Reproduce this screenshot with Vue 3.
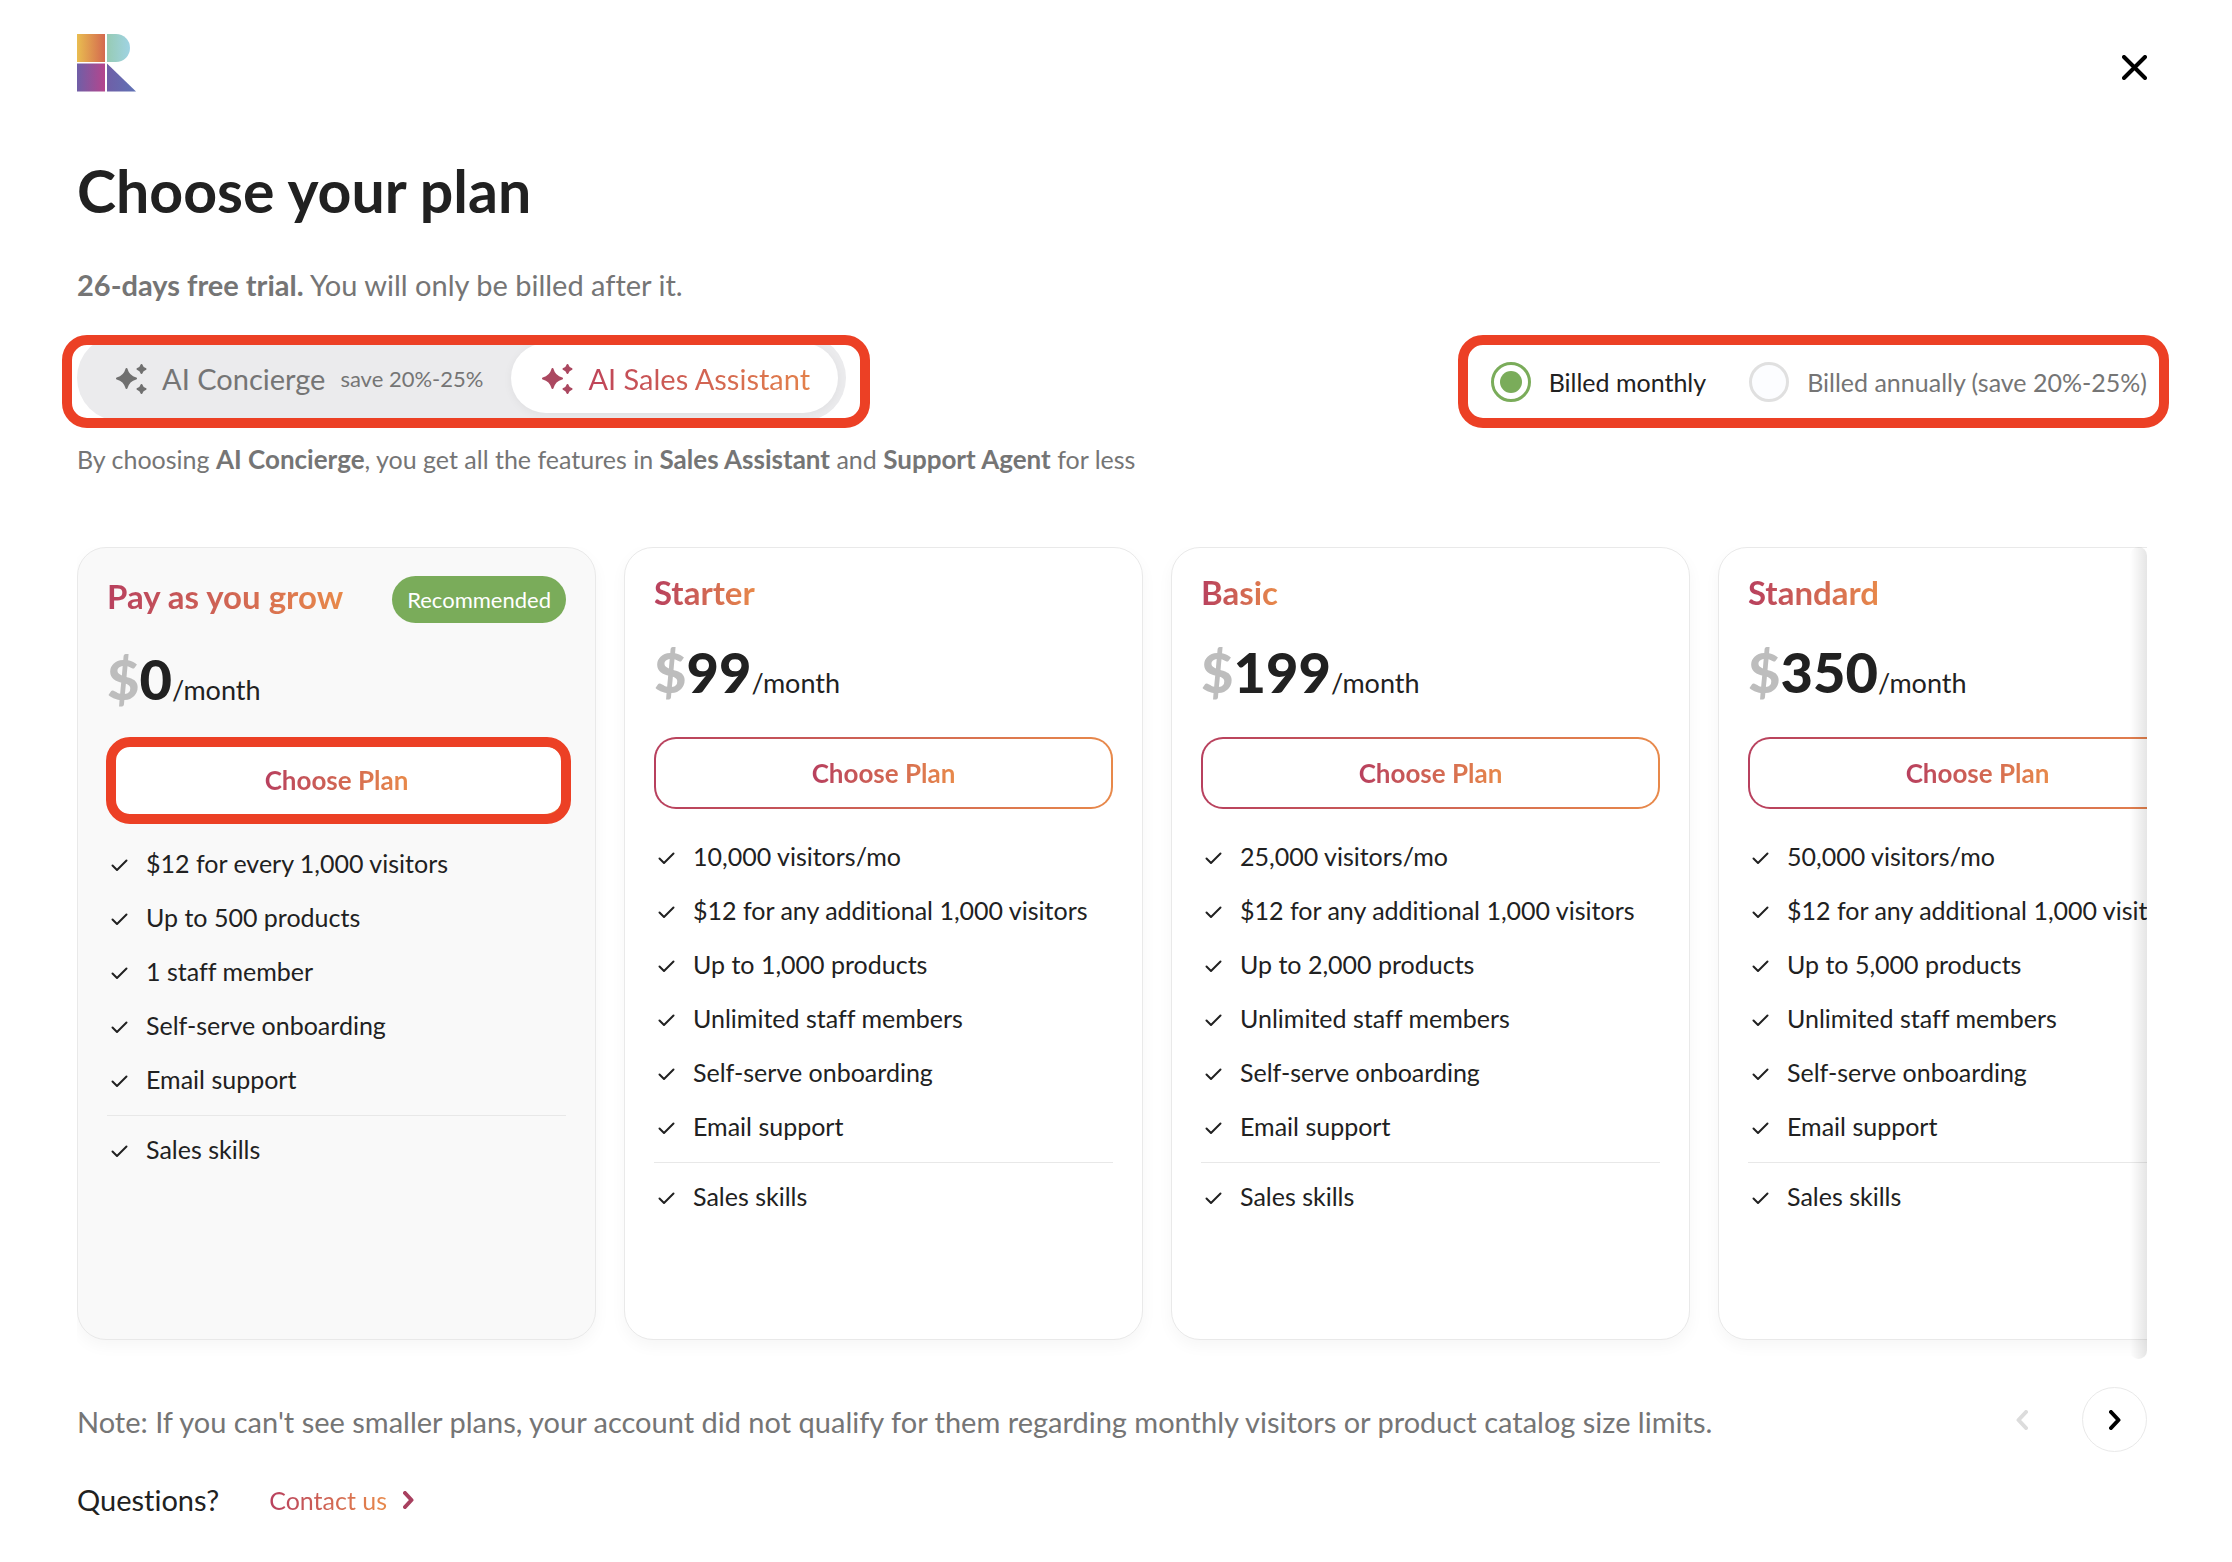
<script setup>
import { ref } from 'vue'

const product = ref('sales')
const billing = ref('monthly')

const tabs = [
  { id: 'concierge', label: 'AI Concierge', hint: 'save 20%-25%' },
  { id: 'sales', label: 'AI Sales Assistant' },
]

const periods = [
  { id: 'monthly', label: 'Billed monthly' },
  { id: 'annually', label: 'Billed annually (save 20%-25%)' },
]

const paidFeatures = (visitors, products) => [
  `${visitors} visitors/mo`,
  '$12 for any additional 1,000 visitors',
  `Up to ${products} products`,
  'Unlimited staff members',
  'Self-serve onboarding',
  'Email support',
]

const plans = [
  {
    name: 'Pay as you grow',
    price: '0',
    recommended: true,
    features: [
      '$12 for every 1,000 visitors',
      'Up to 500 products',
      '1 staff member',
      'Self-serve onboarding',
      'Email support',
    ],
  },
  { name: 'Starter', price: '99', features: paidFeatures('10,000', '1,000') },
  { name: 'Basic', price: '199', features: paidFeatures('25,000', '2,000') },
  { name: 'Standard', price: '350', features: paidFeatures('50,000', '5,000') },
]
const skills = ['Sales skills']
</script>

<template>
  <main class="page">
    <header class="top">
      <svg class="logo" viewBox="0 0 59 58" role="img" aria-label="Logo">
        <defs>
          <linearGradient id="lg-sun"><stop offset="0" stop-color="#e9bd50" /><stop offset="1" stop-color="#d4694f" /></linearGradient>
          <linearGradient id="lg-sky"><stop offset="0" stop-color="#97cbb4" /><stop offset="1" stop-color="#9fd3e3" /></linearGradient>
          <linearGradient id="lg-plum"><stop offset="0" stop-color="#6f5fa7" /><stop offset="1" stop-color="#b5458d" /></linearGradient>
          <linearGradient id="lg-blue"><stop offset="0" stop-color="#6f5fa7" /><stop offset="1" stop-color="#5f72b5" /></linearGradient>
        </defs>
        <rect width="28" height="28" fill="url(#lg-sun)" />
        <path d="M30 0h9a14 14 0 0 1 0 28h-9z" fill="url(#lg-sky)" />
        <rect y="29.500" width="28" height="28" fill="url(#lg-plum)" />
        <path d="M30 29.500v28h29z" fill="url(#lg-blue)" />
      </svg>
      <button class="close" type="button" aria-label="Close">
        <svg width="25" height="25" viewBox="0 0 25 25"><path d="M2 2l21 21M23 2L2 23" /></svg>
      </button>
    </header>

    <h1>Choose your plan</h1>
    <p class="trial"><strong>26-days free trial.</strong> You will only be billed after it.</p>

    <div class="controls">
      <div class="marked marked-tabs">
        <div class="toggle" role="tablist">
          <button
            v-for="tab in tabs"
            :key="tab.id"
            class="tab"
            :class="{ active: product === tab.id }"
            type="button"
            role="tab"
            :aria-selected="product === tab.id"
            @click="product = tab.id"
          >
            <svg class="spark" viewBox="0 0 31 31">
              <path d="M10.500 6Q12.500 13.500 20 15.500Q12.500 17.500 10.500 25Q8.500 17.500 1 15.500Q8.500 13.500 10.500 6Z" />
              <path d="M25.500 2Q26.300 5.200 29.500 6Q26.300 6.800 25.500 10Q24.700 6.800 21.500 6Q24.700 5.200 25.500 2Z" />
              <path d="M25.500 22Q26.300 25.200 29.500 26Q26.300 26.800 25.500 30Q24.700 26.800 21.500 26Q24.700 25.200 25.500 22Z" />
            </svg>
            <span class="tab-label">{{ tab.label }}</span>
            <span v-if="tab.hint" class="hint">{{ tab.hint }}</span>
          </button>
        </div>
      </div>

      <div class="marked marked-billing" role="radiogroup" aria-label="Billing period">
        <label v-for="period in periods" :key="period.id" class="period" :class="{ on: billing === period.id }">
          <input v-model="billing" type="radio" name="billing" :value="period.id" />
          {{ period.label }}
        </label>
      </div>
    </div>

    <p class="explain">
      By choosing <strong>AI Concierge</strong>, you get all the features in
      <strong>Sales Assistant</strong> and <strong>Support Agent</strong> for less
    </p>

    <section class="carousel" aria-label="Plans">
      <div class="track">
        <article v-for="plan in plans" :key="plan.name" class="card" :class="{ featured: plan.recommended }">
          <div class="card-head">
            <h2 class="warm">{{ plan.name }}</h2>
            <span v-if="plan.recommended" class="badge">Recommended</span>
          </div>
          <p class="price"><span class="currency">$</span>{{ plan.price }}<span class="unit">/month</span></p>
          <div class="action">
            <button class="choose" type="button"><span class="warm">Choose Plan</span></button>
          </div>
          <ul>
            <li v-for="item in plan.features" :key="item">
              <svg class="check" viewBox="0 0 17 14"><path d="M1.500 7.500l4.500 4.500L15.500 2.500" /></svg>{{ item }}
            </li>
          </ul>
          <hr />
          <ul>
            <li v-for="item in skills" :key="item">
              <svg class="check" viewBox="0 0 17 14"><path d="M1.500 7.500l4.500 4.500L15.500 2.500" /></svg>{{ item }}
            </li>
          </ul>
        </article>
      </div>
    </section>

    <div class="note-row">
      <p class="note">Note: If you can't see smaller plans, your account did not qualify for them regarding monthly visitors or product catalog size limits.</p>
      <div class="pager">
        <button class="page-btn" type="button" disabled aria-label="Previous plans">
          <svg width="12" height="20" viewBox="0 0 12 20"><path d="M10 2L2.500 10l7.500 8" /></svg>
        </button>
        <button class="page-btn next" type="button" aria-label="Next plans">
          <svg width="12" height="20" viewBox="0 0 12 20"><path d="M2 2l7.500 8L2 18" /></svg>
        </button>
      </div>
    </div>

    <footer class="questions">
      <span>Questions?</span>
      <a href="#contact">
        <span class="warm">Contact us</span>
        <svg width="11" height="18" viewBox="0 0 11 18"><path d="M2 2l6.500 7L2 16" /></svg>
      </a>
    </footer>
  </main>
</template>

<style>
body {
  background: #fff;
}
</style>

<style scoped>
.page {
  padding: 34px 85px 40px 77px;
  color: #212121;
  font-family: Lato, Roboto, sans-serif;
  font-size: 25px;
  font-variant-ligatures: none;
}
h1,
h2,
p,
ul {
  margin: 0;
  padding: 0;
}
button {
  border: 0;
  background: none;
  padding: 0;
  font: inherit;
  color: inherit;
  cursor: pointer;
}
svg {
  flex: none;
  fill: none;
  stroke-linecap: round;
  stroke-linejoin: round;
}
.warm {
  background: linear-gradient(90deg, #b8405e, #e8894a);
  background-clip: text;
  -webkit-background-clip: text;
  color: transparent;
}

.top {
  display: flex;
  justify-content: space-between;
  align-items: flex-end;
}
.logo {
  width: 59px;
  height: 58px;
}
.close {
  display: flex;
  margin-right: -12px;
  padding: 12px;
}
.close svg {
  stroke: #000;
  stroke-width: 4;
}

h1 {
  margin-top: 67px;
  font-size: 59px;
  line-height: 64px;
}
.trial {
  margin-top: 42px;
  font-size: 29px;
  line-height: 40px;
  color: #757575;
}

.controls {
  display: flex;
  justify-content: space-between;
  margin-top: 30px;
  height: 93px;
}
.marked {
  position: relative;
  display: flex;
}
.marked::after {
  content: '';
  position: absolute;
  border: 10px solid #ec4025;
  border-radius: 25px;
  pointer-events: none;
}
.marked-tabs::after {
  inset: 0 -24px 0 -15px;
}
.marked-billing::after {
  inset: 0 -22px 0 -33px;
}
.toggle {
  display: flex;
  height: 86px;
  padding: 8px;
  box-sizing: border-box;
  border-radius: 43px;
  background: #ebebed;
}
.tab {
  display: flex;
  align-items: center;
  gap: 15px;
  padding: 0 28px 0 31px;
  border-radius: 35px;
  font-size: 29px;
  color: #757575;
}
.tab.active {
  background: #fff;
  box-shadow: 0 2px 10px rgba(0, 0, 0, 0.05);
}
.tab.active .tab-label {
  background: linear-gradient(90deg, #bf4459, #e3814b);
  background-clip: text;
  -webkit-background-clip: text;
  color: transparent;
}
.spark {
  width: 31px;
  height: 31px;
  fill: #707070;
  stroke: #707070;
  stroke-width: 2;
}
.active .spark {
  fill: #ab4860;
  stroke: #ab4860;
}
.hint {
  font-size: 22px;
}

.marked-billing {
  align-items: center;
  gap: 43px;
}
.period {
  display: flex;
  align-items: center;
  gap: 18px;
  color: #757575;
}
.period.on {
  color: #212121;
}
.period input {
  appearance: none;
  display: grid;
  place-items: center;
  width: 40px;
  height: 40px;
  margin: 0;
  border: 3px solid #e0e0e0;
  border-radius: 50%;
  background: #fcfdff;
}
.period input:checked {
  border-color: #7aac5a;
  background: #fff;
}
.period input:checked::before {
  content: '';
  width: 22px;
  height: 22px;
  border-radius: 50%;
  background: #7aac5a;
}

.explain {
  margin-top: 15px;
  line-height: 32px;
  color: #757575;
}
.explain strong {
  font-size: 26px;
}

.carousel {
  position: relative;
  overflow: hidden;
  margin-top: 72px;
  padding-bottom: 19px;
}
.carousel::after {
  content: '';
  position: absolute;
  inset: 0 0 0 auto;
  width: 17px;
  border-radius: 10px;
  background: linear-gradient(90deg, rgba(0, 0, 0, 0), rgba(0, 0, 0, 0.1));
}
.track {
  display: flex;
  gap: 28px;
}
.card {
  flex: 0 0 519px;
  box-sizing: border-box;
  min-height: 793px;
  padding: 28px 29px;
  border: 1px solid #e9e9e9;
  border-radius: 29px;
  background: #fff;
  box-shadow: 0 6px 16px rgba(0, 0, 0, 0.04);
}
.card.featured {
  background: #f9f9f9;
}
.card-head {
  display: flex;
  align-items: center;
  justify-content: space-between;
}
h2 {
  padding-bottom: 8px;
  font-size: 33px;
  line-height: 32px;
}
.badge {
  padding: 0 15px;
  border-radius: 24px;
  background: #7aac5a;
  color: #fff;
  font-size: 22px;
  line-height: 47px;
}
.price {
  margin-top: 24px;
  font-size: 56px;
  font-weight: 900;
  line-height: 64px;
}
.currency {
  color: #bdbdbd;
}
.unit {
  font-size: 27px;
  font-weight: 400;
  line-height: 28px;
}
.action {
  position: relative;
  margin-top: 33px;
}
.featured .action::after {
  content: '';
  position: absolute;
  inset: -7px -5px -8px -1px;
  border: 10px solid #ec4025;
  border-radius: 24px;
  pointer-events: none;
}
.choose {
  display: block;
  width: 100%;
  height: 72px;
  border: 2px solid transparent;
  border-radius: 22px;
  background:
    linear-gradient(#fff, #fff) padding-box,
    linear-gradient(90deg, #b8405e, #e8894a) border-box;
  font-size: 26px;
  font-weight: 700;
}
.action + ul {
  margin-top: 20px;
}
li {
  display: flex;
  align-items: center;
  gap: 18px;
  padding-left: 4px;
  line-height: 54px;
  white-space: nowrap;
}
.check {
  width: 17px;
  height: 14px;
  margin-top: 3px;
  stroke: #212121;
  stroke-width: 2;
}
hr {
  height: 1px;
  margin: 9px 0 6px;
  border: 0;
  background: #e8e8e8;
}

.note-row {
  display: flex;
  align-items: center;
  justify-content: space-between;
  gap: 40px;
  margin-top: 28px;
}
.note {
  padding-top: 4px;
  font-size: 29px;
  line-height: 40px;
  color: #757575;
}
.pager {
  display: flex;
  gap: 28px;
}
.page-btn {
  display: grid;
  place-items: center;
  width: 65px;
  height: 65px;
  border: 1px solid transparent;
  border-radius: 50%;
}
.page-btn svg {
  stroke: #000;
  stroke-width: 4;
}
.page-btn:disabled svg {
  stroke: #dcdcdc;
}
.next {
  border-color: #e9e9e9;
}

.questions {
  display: flex;
  align-items: center;
  gap: 50px;
  margin-top: 28px;
  font-size: 29px;
  line-height: 40px;
}
.questions a {
  display: flex;
  align-items: center;
  gap: 16px;
  font-size: 25px;
  text-decoration: none;
}
.questions a svg {
  stroke: #a8405f;
  stroke-width: 4;
}
</style>
